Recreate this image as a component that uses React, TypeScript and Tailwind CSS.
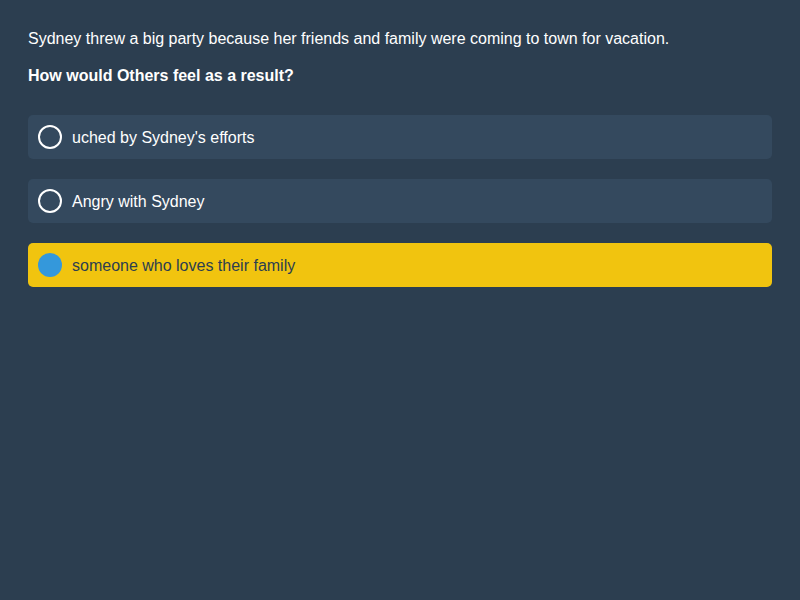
const OPTIONS = [
  { label: "uched by Sydney's efforts", selected: false },
  { label: "Angry with Sydney", selected: false },
  { label: "someone who loves their family", selected: true },
];

export default function App() {
  return (
    <div className="min-h-screen bg-[#2c3e50] px-7 pt-[29px] pb-7 text-white font-['Liberation_Sans',Arial,sans-serif]">
      <p className="text-base leading-5">
        Sydney threw a big party because her friends and family were coming to town for vacation.
      </p>
      <p className="mt-[17px] text-base leading-5 font-bold">How would Others feel as a result?</p>
      <div className="mt-[29px] flex flex-col gap-5">
        {OPTIONS.map((o) => (
          <div
            key={o.label}
            className={
              o.selected
                ? "flex h-11 items-center rounded-[5px] bg-[#f1c40f] px-2.5 text-[#2c3e50]"
                : "flex h-11 items-center rounded-[5px] bg-[#34495e] px-2.5 text-white"
            }
          >
            {o.selected ? (
              <span className="h-6 w-6 rounded-full bg-[#3498db]" />
            ) : (
              <span className="h-6 w-6 rounded-full border-2 border-white" />
            )}
            <span className="ml-2.5 pt-0.5 text-base">{o.label}</span>
          </div>
        ))}
      </div>
    </div>
  );
}
